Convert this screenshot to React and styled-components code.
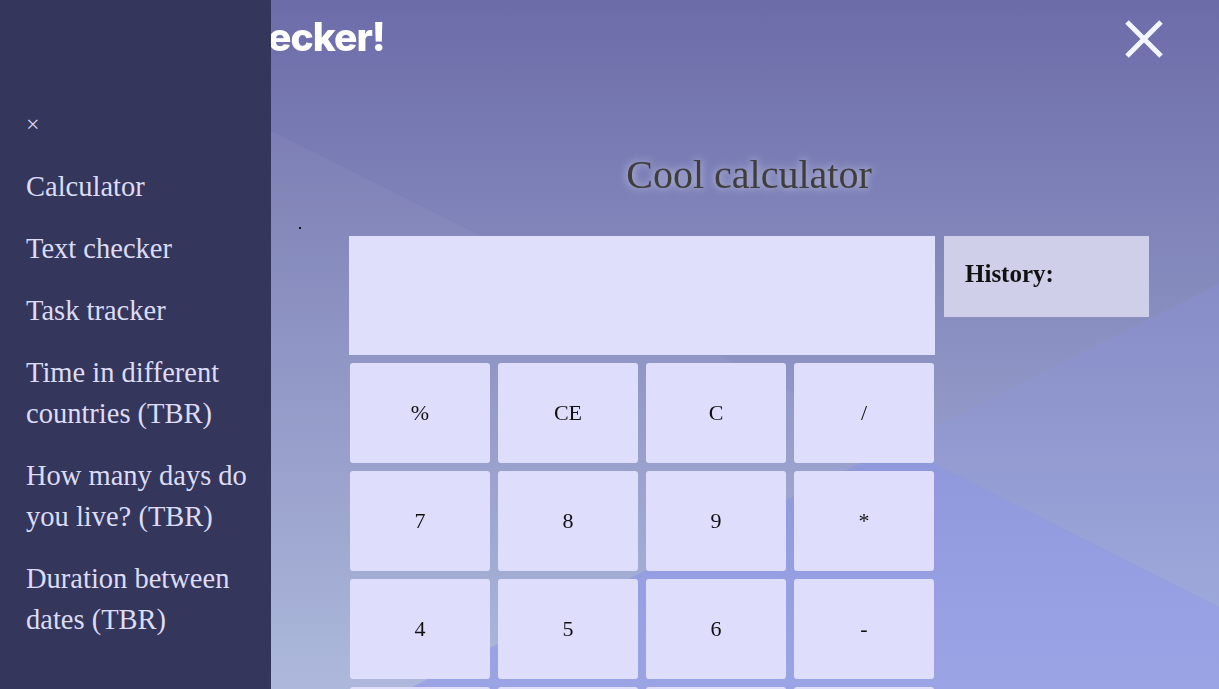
import React from "react";
import styled, { createGlobalStyle } from "styled-components";

const GlobalStyle = createGlobalStyle`
  html, body {
    margin: 0;
    padding: 0;
  }
  body {
    font-family: "Liberation Serif", serif;
    background: #6c6da9;
    overflow: hidden;
  }
`;

const Backdrop = styled.svg`
  position: fixed;
  inset: 0;
  width: 100vw;
  height: 100vh;
  z-index: 0;
`;

const Page = styled.div`
  position: relative;
  z-index: 1;
  min-height: 100vh;
`;

const Header = styled.header`
  display: flex;
  justify-content: space-between;
  align-items: flex-start;
  padding: 13px 56px 0 134px;
`;

const Brand = styled.h1`
  margin: 0;
  font-family: "Inter", "Liberation Sans", sans-serif;
  font-weight: 800;
  font-size: 39px;
  letter-spacing: -1px;
  color: #ffffff;
`;

const CloseButton = styled.button`
  border: none;
  background: none;
  padding: 0;
  margin-top: 7px;
  width: 38px;
  height: 38px;
  cursor: pointer;
`;

const Main = styled.main`
  padding-left: 279px;
  display: flex;
  flex-direction: column;
  align-items: center;
`;

const Title = styled.h2`
  margin: 91px 0 0;
  font-family: "Liberation Serif", serif;
  font-weight: 400;
  font-size: 40px;
  color: #3f3e3b;
  text-shadow: 0 0 8px rgba(225, 228, 250, 0.85);
`;

const Dot = styled.span`
  align-self: flex-start;
  margin: 29px 0 0 20px;
  width: 2px;
  height: 2px;
  background: #111;
`;

const Calculator = styled.div`
  display: flex;
  align-items: flex-start;
  gap: 9px;
  margin-top: 7px;
`;

const Pad = styled.div`
  width: 586px;
  display: flex;
  flex-direction: column;
  gap: 8px;
`;

const Display = styled.div`
  height: 119px;
  background: #dfdffc;
`;

const Keys = styled.div`
  display: grid;
  grid-template-columns: repeat(4, 140px);
  grid-auto-rows: 100px;
  gap: 8px;
  padding-left: 1px;
`;

const Key = styled.button`
  border: none;
  border-radius: 3px;
  background: #dedefc;
  font-family: "Liberation Serif", serif;
  font-size: 22px;
  color: #111;
  cursor: pointer;
`;

const History = styled.div`
  width: 205px;
  height: 81px;
  box-sizing: border-box;
  padding: 20px 21px;
  background: #cfcfea;
  font-family: "Liberation Serif", serif;
  font-weight: 700;
  font-size: 25px;
  line-height: 36px;
  color: #111;
`;

const Sidebar = styled.nav`
  position: fixed;
  top: 0;
  left: 0;
  bottom: 0;
  width: 271px;
  z-index: 2;
  background: #35365b;
  box-sizing: border-box;
  padding: 104px 0 0 26px;
`;

const Menu = styled.ul`
  list-style: none;
  margin: 0;
  padding: 0;
  display: flex;
  flex-direction: column;
  gap: 21px;
`;

const MenuItem = styled.li`
  font-family: "Liberation Serif", serif;
  font-size: ${(p) => (p.$small ? "24px" : "28.5px")};
  line-height: 41px;
  color: #dcdcf6;
  padding-right: 16px;
`;

const keys = ["%", "CE", "C", "/", "7", "8", "9", "*", "4", "5", "6", "-", "1", "2", "3", "+"];

const links = [
  "Calculator",
  "Text checker",
  "Task tracker",
  "Time in different countries (TBR)",
  "How many days do you live? (TBR)",
  "Duration between dates (TBR)",
];

const App = () => {
  return (
    <>
      <GlobalStyle />
      <Backdrop viewBox="0 0 1219 689" preserveAspectRatio="none">
        <defs>
          <linearGradient id="bg" x1="0" y1="0" x2="0" y2="1">
            <stop offset="0" stopColor="#6c6ca9" />
            <stop offset="1" stopColor="#aab6db" />
          </linearGradient>
        </defs>
        <rect width="1219" height="689" fill="url(#bg)" />
        <polygon points="0,-5 897,445 408,689 0,689" fill="#ffffff" opacity="0.04" />
        <polygon points="897,445 1219,284 1219,607" fill="#8c94f0" opacity="0.2" />
        <polygon points="408,689 897,445 1219,607 1219,689" fill="#8c94f0" opacity="0.5" />
      </Backdrop>
      <Page>
        <Header>
          <Brand>Text checker!</Brand>
          <CloseButton aria-label="Close">
            <svg width="38" height="38" viewBox="0 0 38 38">
              <path d="M2 2 L36 36 M36 2 L2 36" stroke="#f4f6ff" strokeWidth="5" />
            </svg>
          </CloseButton>
        </Header>
        <Main>
          <Title>Cool calculator</Title>
          <Dot />
          <Calculator>
            <Pad>
              <Display />
              <Keys>
                {keys.map((k) => (
                  <Key key={k}>{k}</Key>
                ))}
              </Keys>
            </Pad>
            <History>History:</History>
          </Calculator>
        </Main>
      </Page>
      <Sidebar>
        <Menu>
          <MenuItem $small>×</MenuItem>
          {links.map((l) => (
            <MenuItem key={l}>{l}</MenuItem>
          ))}
        </Menu>
      </Sidebar>
    </>
  );
};

export default App;
